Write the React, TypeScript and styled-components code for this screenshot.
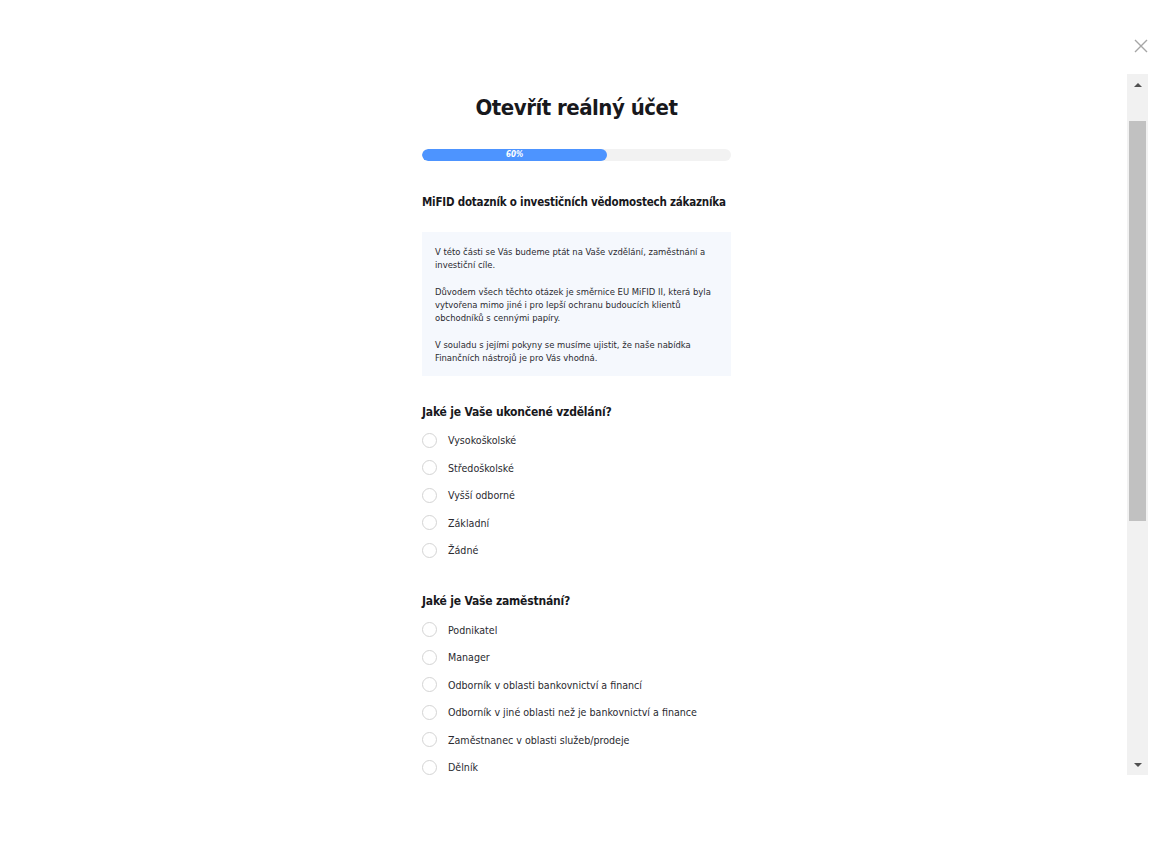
import React from "react";
import styled, { createGlobalStyle } from "styled-components";

const GlobalStyle = createGlobalStyle`
  html, body {
    margin: 0;
    padding: 0;
    background: #ffffff;
    font-family: "DejaVu Sans Condensed", "Liberation Sans", sans-serif;
    color: #1b1b1f;
  }
`;

const education = [
  "Vysokoškolské",
  "Středoškolské",
  "Vyšší odborné",
  "Základní",
  "Žádné",
];

const employment = [
  "Podnikatel",
  "Manager",
  "Odborník v oblasti bankovnictví a financí",
  "Odborník v jiné oblasti než je bankovnictví a finance",
  "Zaměstnanec v oblasti služeb/prodeje",
  "Dělník",
];

function Question({ title, options }: { title: string; options: string[] }) {
  return (
    <QuestionBlock>
      <QuestionTitle>{title}</QuestionTitle>
      <OptionList>
        {options.map((o) => (
          <Option key={o}>
            <Radio />
            <OptionLabel>{o}</OptionLabel>
          </Option>
        ))}
      </OptionList>
    </QuestionBlock>
  );
}

export default function App() {
  const progress = 60;
  return (
    <>
      <GlobalStyle />
      <Page>
        <TopBar>
          <CloseButton aria-label="Zavřít">
            <svg width="14" height="14" viewBox="0 0 14 14">
              <path d="M1 1L13 13M13 1L1 13" stroke="#a6a6a6" strokeWidth="1.4" />
            </svg>
          </CloseButton>
        </TopBar>
        <Panel>
          <ScrollArea>
            <Column>
              <Heading>Otevřít reálný účet</Heading>
              <ProgressTrack>
                <ProgressFill style={{ width: `${progress}%` }}>
                  {progress}%
                </ProgressFill>
              </ProgressTrack>
              <SectionTitle>
                MiFID dotazník o investičních vědomostech zákazníka
              </SectionTitle>
              <InfoBox>
                <p>
                  V této části se Vás budeme ptát na Vaše vzdělání, zaměstnání a
                  investiční cíle.
                </p>
                <p>
                  Důvodem všech těchto otázek je směrnice EU MiFID II, která byla
                  vytvořena mimo jiné i pro lepší ochranu budoucích klientů
                  obchodníků s cennými papíry.
                </p>
                <p>
                  V souladu s jejími pokyny se musíme ujistit, že naše nabídka
                  Finančních nástrojů je pro Vás vhodná.
                </p>
              </InfoBox>
              <Question title="Jaké je Vaše ukončené vzdělání?" options={education} />
              <Question title="Jaké je Vaše zaměstnání?" options={employment} />
            </Column>
          </ScrollArea>
          <Scrollbar>
            <ScrollButton>
              <Arrow $dir="up" />
            </ScrollButton>
            <ScrollTrack>
              <ScrollThumb />
            </ScrollTrack>
            <ScrollButton>
              <Arrow $dir="down" />
            </ScrollButton>
          </Scrollbar>
        </Panel>
      </Page>
    </>
  );
}

const Page = styled.div`
  height: 853px;
  display: flex;
  flex-direction: column;
  overflow: hidden;
`;

const TopBar = styled.div`
  height: 74px;
  display: flex;
  justify-content: flex-end;
  align-items: flex-start;
  padding: 39px 22px 0 0;
  box-sizing: border-box;
`;

const CloseButton = styled.button`
  border: 0;
  background: none;
  padding: 0;
  width: 14px;
  height: 14px;
  cursor: pointer;
  display: flex;
`;

const Panel = styled.div`
  display: flex;
  height: 701px;
  margin: 0 22px 0 26px;
`;

const ScrollArea = styled.div`
  flex: 1;
  overflow: hidden;
  display: flex;
  justify-content: center;
`;

const Column = styled.div`
  width: 309px;
  padding-top: 20px;
`;

const Heading = styled.h1`
  margin: 0;
  font-size: 22px;
  line-height: 28px;
  font-weight: 700;
  letter-spacing: -0.5px;
  text-align: center;
  color: #18181c;
`;

const ProgressTrack = styled.div`
  margin-top: 27px;
  height: 12px;
  border-radius: 6px;
  background: #f2f2f2;
  overflow: hidden;
`;

const ProgressFill = styled.div`
  height: 100%;
  border-radius: 6px;
  background: #4d94ff;
  color: #ffffff;
  font-size: 8px;
  font-weight: 700;
  font-style: italic;
  line-height: 12px;
  text-align: center;
`;

const SectionTitle = styled.h2`
  margin: 33px 0 0;
  font-size: 11.5px;
  line-height: 16px;
  font-weight: 700;
  letter-spacing: -0.2px;
  color: #18181c;
  white-space: nowrap;
`;

const InfoBox = styled.div`
  margin-top: 22px;
  background: #f5f8fd;
  padding: 13px 14px 11px 13px;
  font-size: 9.4px;
  line-height: 13.3px;
  color: #2a2a30;

  p {
    margin: 0 0 13.3px;
  }
  p:last-child {
    margin-bottom: 0;
  }
`;

const QuestionBlock = styled.div`
  margin-top: 28px;

  & + & {
    margin-top: 29px;
  }
`;

const QuestionTitle = styled.h3`
  margin: 0;
  font-size: 12px;
  line-height: 16px;
  font-weight: 700;
  letter-spacing: -0.2px;
  color: #18181c;
`;

const OptionList = styled.div`
  margin-top: 7px;
  display: flex;
  flex-direction: column;
`;

const Option = styled.label`
  display: flex;
  align-items: center;
  height: 27.5px;
  cursor: pointer;
`;

const Radio = styled.span`
  width: 13px;
  height: 13px;
  border: 1px solid #d4d4d4;
  border-radius: 50%;
  background: #fff;
  flex-shrink: 0;
`;

const OptionLabel = styled.span`
  margin-left: 11px;
  font-size: 10.6px;
  color: #2a2a30;
`;

const Scrollbar = styled.div`
  width: 21px;
  background: #f1f1f1;
  display: flex;
  flex-direction: column;
`;

const ScrollButton = styled.div`
  height: 21px;
  display: flex;
  align-items: center;
  justify-content: center;
`;

const Arrow = styled.span<{ $dir: "up" | "down" }>`
  width: 0;
  height: 0;
  border-left: 4px solid transparent;
  border-right: 4px solid transparent;
  ${(p) =>
    p.$dir === "up"
      ? "border-bottom: 4px solid #505050;"
      : "border-top: 4px solid #505050;"}
`;

const ScrollTrack = styled.div`
  flex: 1;
  padding: 26px 2px 0;
`;

const ScrollThumb = styled.div`
  height: 400px;
  background: #c1c1c1;
`;
